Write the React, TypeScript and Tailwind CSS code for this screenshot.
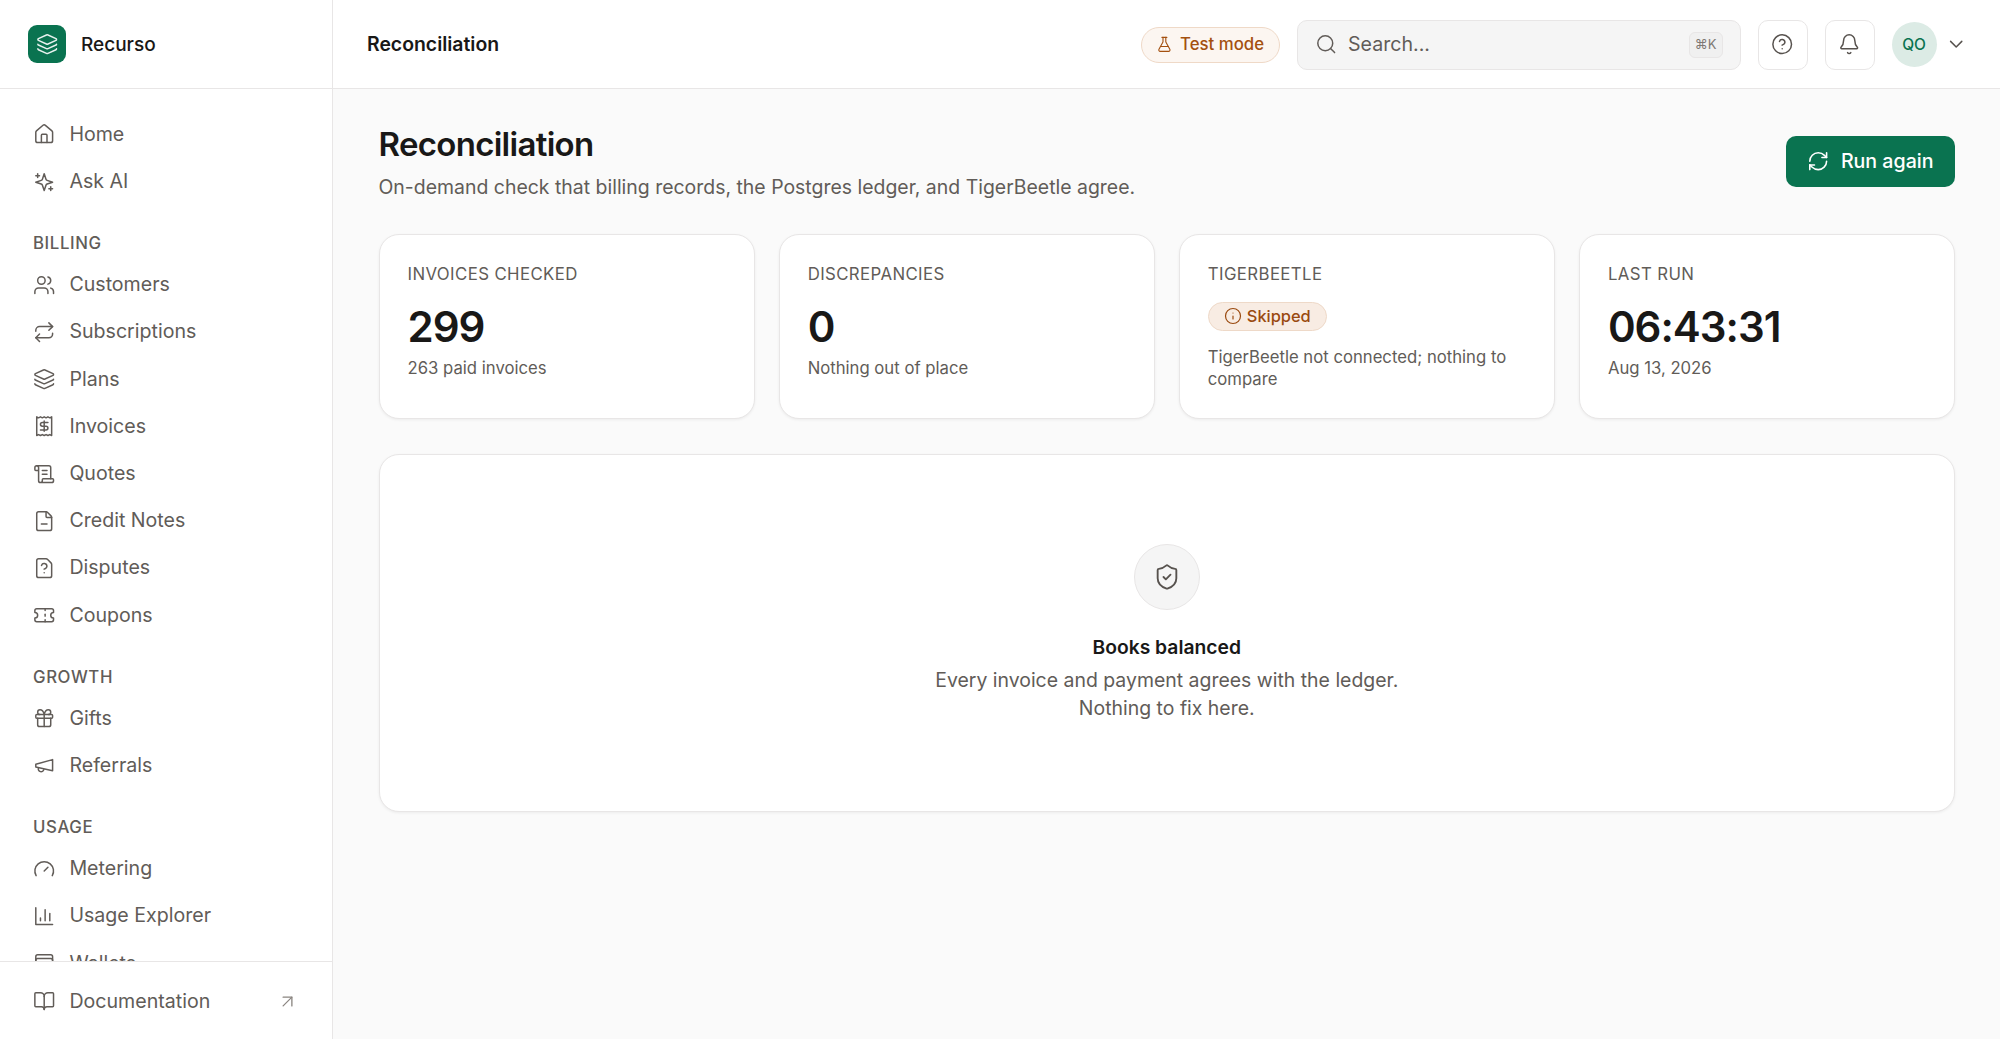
import {
  House, Users, Repeat, Layers, Receipt, ScrollText, FileMinus, FileQuestion, Ticket,
  Gift, Gauge, WalletCards, BookOpen, ArrowUpRight, FlaskConical, Search,
  CircleHelp, Bell, ChevronDown, RefreshCw, Info, ShieldCheck,
} from 'lucide-react';
import React from 'react';

type IconProps = { size?: number; strokeWidth?: number; className?: string };

function Svg({ size = 22.4, strokeWidth = 1.6, className, children }: IconProps & { children: React.ReactNode }) {
  return (
    <svg
      width={size}
      height={size}
      viewBox="0 0 24 24"
      fill="none"
      stroke="currentColor"
      strokeWidth={strokeWidth}
      strokeLinecap="round"
      strokeLinejoin="round"
      className={className}
    >
      {children}
    </svg>
  );
}

// older lucide drawings, the installed version redrew these
function SparklesIcon(props: IconProps) {
  return (
    <Svg {...props}>
      <path d="m12 3-1.912 5.813a2 2 0 0 1-1.275 1.275L3 12l5.813 1.912a2 2 0 0 1 1.275 1.275L12 21l1.912-5.813a2 2 0 0 1 1.275-1.275L21 12l-5.813-1.912a2 2 0 0 1-1.275-1.275L12 3Z" />
      <path d="M5 3v4" />
      <path d="M19 17v4" />
      <path d="M3 5h4" />
      <path d="M17 19h4" />
    </Svg>
  );
}

function MegaphoneIcon(props: IconProps) {
  return (
    <Svg {...props}>
      <path d="m3 11 18-5v12L3 14v-3z" />
      <path d="M11.6 16.8a3 3 0 1 1-5.8-1.6" />
    </Svg>
  );
}

function BarChartIcon(props: IconProps) {
  return (
    <Svg {...props}>
      <path d="M3 3v18h18" />
      <path d="M18 17V9" />
      <path d="M13 17V5" />
      <path d="M8 17v-3" />
    </Svg>
  );
}

const sections = [
  { items: [{ label: 'Home', icon: House }, { label: 'Ask AI', icon: SparklesIcon }] },
  {
    title: 'BILLING',
    items: [
      { label: 'Customers', icon: Users },
      { label: 'Subscriptions', icon: Repeat },
      { label: 'Plans', icon: Layers },
      { label: 'Invoices', icon: Receipt },
      { label: 'Quotes', icon: ScrollText },
      { label: 'Credit Notes', icon: FileMinus },
      { label: 'Disputes', icon: FileQuestion },
      { label: 'Coupons', icon: Ticket },
    ],
  },
  { title: 'GROWTH', items: [{ label: 'Gifts', icon: Gift }, { label: 'Referrals', icon: MegaphoneIcon }] },
  {
    title: 'USAGE',
    items: [
      { label: 'Metering', icon: Gauge },
      { label: 'Usage Explorer', icon: BarChartIcon },
      { label: 'Wallets', icon: WalletCards },
    ],
  },
];

function Sidebar() {
  return (
    <aside className="flex h-full w-[333px] shrink-0 flex-col border-r border-[#e8e6e6] bg-white">
      <div className="flex h-[89px] shrink-0 items-center gap-[15px] border-b border-[#e8e6e6] pl-[28px]">
        <div className="flex size-[38px] items-center justify-center rounded-[9px] bg-[#0a7350] text-white">
          <Layers size={22.4} strokeWidth={1.6} className="opacity-90" />
        </div>
        <span className="pt-[2px] text-[19px] font-medium text-[#191817]">Recurso</span>
      </div>
      <nav className="min-h-0 flex-1 overflow-hidden pt-[22px] pr-[34px] pl-[33px]">
        {sections.map((section, i) => (
          <div key={i} className={section.title ? 'mt-[18px]' : ''}>
            {section.title && (
              <div className="flex h-[38px] items-start pt-[8px] text-[16.8px] leading-[24px] font-medium tracking-[0.6px] text-[#615c58]">
                {section.title}
              </div>
            )}
            {section.items.map(({ label, icon: Icon }) => (
              <div key={label} className="flex h-[47.2px] items-center gap-[14px] text-[19.6px] text-[#615c58]">
                <Icon size={22.4} strokeWidth={1.6} className="shrink-0" />
                <span>{label}</span>
              </div>
            ))}
          </div>
        ))}
      </nav>
      <div className="flex h-[78px] shrink-0 items-center border-t border-[#e8e6e6] pt-[2px] pr-[34px] pl-[33px] text-[19.6px] text-[#615c58]">
        <BookOpen size={22.4} strokeWidth={1.6} className="mr-[14px] shrink-0" />
        <span>Documentation</span>
        <ArrowUpRight size={21} strokeWidth={1.5} className="ml-auto text-[#8a8580]" />
      </div>
    </aside>
  );
}

function TopBar() {
  return (
    <header className="flex h-[89px] shrink-0 items-center border-b border-[#e8e6e6] bg-white pt-[1px] pr-[33px] pl-[34px]">
      <h2 className="text-[19.4px] font-semibold text-[#191817]">Reconciliation</h2>
      <div className="ml-auto flex items-center">
        <div className="flex h-[36px] w-[139px] items-center justify-center gap-[7px] rounded-full border border-[#efd9c7] bg-[#fcf6f1] text-[16.8px] font-medium text-[#a4500f]">
          <FlaskConical size={16.8} strokeWidth={1.6} />
          <span>Test mode</span>
        </div>
        <div className="ml-[17px] flex h-[50px] w-[444px] items-center rounded-[10px] border border-[#e8e6e6] bg-[#f5f5f5] pr-[17px] pl-[17px] text-[19.6px] text-[#615c58]">
          <Search size={22.4} strokeWidth={1.6} />
          <span className="ml-[11px]">Search...</span>
          <kbd className="ml-auto flex h-[26px] w-[34px] items-center justify-center rounded-[6px] border border-[#e8e6e6] bg-[#f0f0f0] font-['Inter',sans-serif] text-[13px] text-[#7d7873]">⌘K</kbd>
        </div>
        <button className="ml-[17px] flex size-[50px] items-center justify-center rounded-[10px] border border-[#e8e6e6] bg-white text-[#57524e]">
          <CircleHelp size={22.4} strokeWidth={1.6} />
        </button>
        <button className="ml-[17px] flex size-[50px] items-center justify-center rounded-[10px] border border-[#e8e6e6] bg-white text-[#57524e]">
          <Bell size={22.4} strokeWidth={1.6} />
        </button>
        <div className="ml-[17px] flex size-[45px] items-center justify-center rounded-full bg-[#dcebe5] text-[15.5px] font-medium text-[#0a7350]">QO</div>
        <ChevronDown size={22.4} strokeWidth={1.6} className="ml-[8px] text-[#57524e]" />
      </div>
    </header>
  );
}

function StatCard({ label, children }: { label: string; children: React.ReactNode }) {
  return (
    <div className="rounded-[20px] border border-[#e8e6e6] bg-white px-[28px] pt-[28px] pb-[27px] shadow-[0_1px_3px_rgba(0,0,0,0.06)]">
      <div className="mb-[17px] text-[16.8px] leading-[22px] tracking-[0.4px] text-[#615c58]">{label}</div>
      {children}
    </div>
  );
}

function Value({ value, sub }: { value: string; sub: string }) {
  return (
    <>
      <div className="text-[42px] leading-[50px] font-semibold tracking-[-1px] text-[#191817]">{value}</div>
      <div className="mt-[4px] text-[16.7px] leading-[24px] text-[#615c58]">{sub}</div>
    </>
  );
}

export default function App() {
  return (
    <div className="flex h-screen w-full overflow-hidden bg-[#fafafa] font-['Inter',sans-serif]">
      <Sidebar />
      <div className="flex min-w-0 flex-1 flex-col">
        <TopBar />
        <main className="flex-1 pt-[33px] pr-[45px] pl-[45.5px]">
          <div className="flex items-center justify-between">
            <div>
              <h1 className="text-[33px] leading-[45px] font-semibold tracking-[-0.7px] text-[#191817]">Reconciliation</h1>
              <p className="mt-[6px] text-[19.44px] leading-[28px] text-[#615c58]">
                On-demand check that billing records, the Postgres ledger, and TigerBeetle agree.
              </p>
            </div>
            <button className="flex h-[51px] w-[169px] items-center justify-center gap-[11px] rounded-[10px] bg-[#0a7350] text-[19.6px] font-medium text-white">
              <RefreshCw size={22.4} strokeWidth={1.7} />
              <span>Run again</span>
            </button>
          </div>
          <div className="mt-[32.5px] grid grid-cols-4 gap-[24px]">
            <StatCard label="INVOICES CHECKED"><Value value="299" sub="263 paid invoices" /></StatCard>
            <StatCard label="DISCREPANCIES"><Value value="0" sub="Nothing out of place" /></StatCard>
            <StatCard label="TIGERBEETLE">
              <div className="flex h-[29px] w-[119px] items-center justify-center gap-[5px] rounded-full border border-[#eed9c8] bg-[#f8ece3] text-[16.4px] font-medium text-[#9a4a10]">
                <Info size={18} strokeWidth={1.6} />
                <span>Skipped</span>
              </div>
              <p className="mt-[15px] mb-[1px] text-[16.7px] leading-[22.4px] text-[#615c58]">TigerBeetle not connected; nothing to compare</p>
            </StatCard>
            <StatCard label="LAST RUN"><Value value="06:43:31" sub="Aug 13, 2026" /></StatCard>
          </div>
          <section className="mt-[35px] flex h-[358px] flex-col items-center justify-center rounded-[20px] border border-[#e8e6e6] bg-white shadow-[0_1px_3px_rgba(0,0,0,0.06)]">
            <div className="flex size-[66px] items-center justify-center rounded-full border border-[#e8e6e6] bg-[#f5f5f5] text-[#57524e]">
              <ShieldCheck size={28} strokeWidth={1.6} />
            </div>
            <h3 className="mt-[23px] text-[19.3px] leading-[28px] font-semibold text-[#191817]">Books balanced</h3>
            <p className="mt-[5px] text-center text-[19.44px] leading-[28px] text-[#615c58]">
              Every invoice and payment agrees with the ledger.
              <br />
              Nothing to fix here.
            </p>
          </section>
        </main>
      </div>
    </div>
  );
}
